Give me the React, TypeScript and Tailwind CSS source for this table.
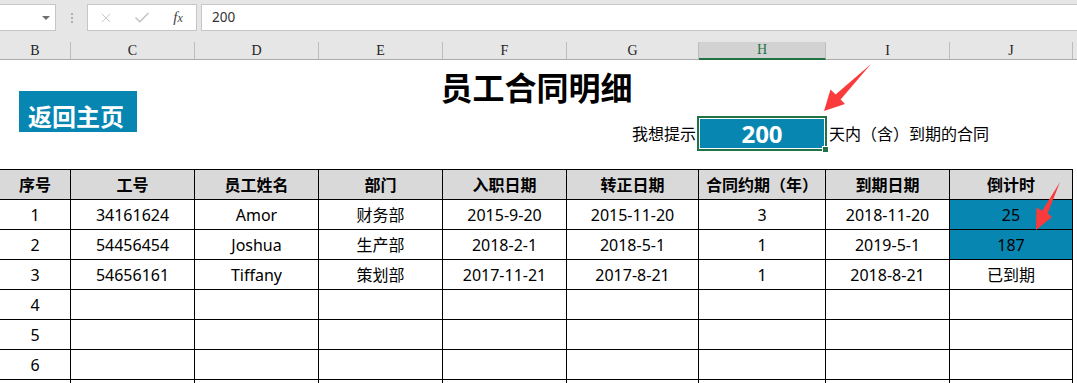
import React from "react";
import { X, Check } from "lucide-react";

const font = { fontFamily: '"Noto Sans", "Noto Sans CJK SC", sans-serif' };

const letters = ["B", "C", "D", "E", "F", "G", "H", "I", "J", ""];
const header = ["序号", "工号", "员工姓名", "部门", "入职日期", "转正日期", "合同约期（年）", "到期日期", "倒计时"];
const rows: { cells: string[]; blue?: boolean }[] = [
  { cells: ["1", "34161624", "Amor", "财务部", "2015-9-20", "2015-11-20", "3", "2018-11-20", "25"], blue: true },
  { cells: ["2", "54456454", "Joshua", "生产部", "2018-2-1", "2018-5-1", "1", "2019-5-1", "187"], blue: true },
  { cells: ["3", "54656161", "Tiffany", "策划部", "2017-11-21", "2017-8-21", "1", "2018-8-21", "已到期"] },
  { cells: ["4", "", "", "", "", "", "", "", ""] },
  { cells: ["5", "", "", "", "", "", "", "", ""] },
  { cells: ["6", "", "", "", "", "", "", "", ""] },
  { cells: ["", "", "", "", "", "", "", "", ""] },
];

const gridCols = "grid grid-cols-[71px_124px_124px_124px_124px_132px_127px_124px_123px_1fr]";

export default function App() {
  return (
    <div className="relative w-[1077px] h-[383px] overflow-hidden bg-white" style={font}>
      {/* formula bar */}
      <div className="flex h-[42px] bg-[#e6e6e6] pt-[4px] items-start">
        <div className="w-[56px] h-[27px] bg-white border border-l-0 border-[#c6c6c6] flex items-center justify-end pr-[5px]">
          <div className="w-0 h-0 border-l-[4px] border-r-[4px] border-t-[4px] border-l-transparent border-r-transparent border-t-[#707070]" />
        </div>
        <div className="w-[31px] h-[27px] flex flex-col items-center justify-center gap-[2px]">
          <div className="w-[2px] h-[2px] bg-[#b0b0b0]" />
          <div className="w-[2px] h-[2px] bg-[#b0b0b0]" />
          <div className="w-[2px] h-[2px] bg-[#b0b0b0]" />
        </div>
        <div className="w-[110px] h-[27px] bg-white border border-[#c6c6c6] flex items-center">
          <div className="w-[36px] flex justify-center">
            <X size={16} strokeWidth={1.2} color="#bdbdbd" />
          </div>
          <div className="w-[36px] flex justify-center">
            <Check size={18} strokeWidth={2.2} color="#c4c4c4" />
          </div>
          <div className="w-[36px] flex justify-center">
            <span className="italic text-[15px] text-[#444]" style={{ fontFamily: '"Liberation Serif", serif' }}>
              f<span className="text-[12px]">x</span>
            </span>
          </div>
        </div>
        <div className="ml-[4px] flex-1 h-[27px] bg-white border border-r-0 border-[#c6c6c6] flex items-center pl-[10px]">
          <span className="text-[13.5px] text-[#333]">200</span>
        </div>
      </div>

      {/* column letters */}
      <div className={`${gridCols} h-[18px] bg-[#e6e6e6] border-b border-[#ababab]`}>
        {letters.map((l, i) => (
          <div
            key={i}
            className={`flex items-center justify-center text-[14px] leading-none ${
              i < 9 ? "border-r border-[#bdbdbd]" : ""
            } ${l === "H" ? "bg-[#d2d2d2] text-[#217346] border-b-2 border-b-[#217346] -mb-px" : "text-[#222]"}`}
            style={{ fontFamily: '"Liberation Serif", serif' }}
          >
            {l}
          </div>
        ))}
      </div>

      {/* top block */}
      <div className={`${gridCols} grid-rows-[56px_35px_18px]`}>
        <div className="col-start-1 col-span-2 row-start-1 row-span-2 self-start mt-[31px] ml-[19px] w-[118px] h-[41px] bg-[#0786b2] flex items-end pl-[9px] pb-[3px]">
          <span className="text-white font-bold text-[24px] leading-[24px]">返回主页</span>
        </div>
        <div className="col-start-1 col-span-9 row-start-1 flex justify-center pt-[12px]">
          <span className="text-[32px] leading-[32px] font-bold text-black">员工合同明细</span>
        </div>
        <div className="col-start-6 row-start-2 flex items-center justify-end pr-[3px]">
          <span className="text-[16px] text-black whitespace-nowrap">我想提示</span>
        </div>
        <div className="col-start-7 row-start-2 relative -ml-[2px] -mr-px border-2 border-[#217346]">
          <div className="h-full border border-white bg-[#0786b2] flex items-center justify-center">
            <span className="text-white font-bold text-[24px] leading-none">200</span>
          </div>
          <div className="absolute -right-[4px] -bottom-[4px] w-[7px] h-[7px] bg-[#217346] border border-white" />
        </div>
        <div className="col-start-8 col-span-3 row-start-2 flex items-center pl-[3px]">
          <span className="text-[16px] text-black whitespace-nowrap">天内（含）到期的合同</span>
        </div>
      </div>

      {/* table */}
      <div className={`${gridCols} h-[31px]`}>
        {header.map((h, i) => (
          <div
            key={i}
            className="bg-[#d9d9d9] border-t border-r border-b border-black flex items-center justify-center font-bold text-[16px] text-black whitespace-nowrap"
          >
            {h}
          </div>
        ))}
        <div className="bg-white" />
      </div>
      {rows.map((r, ri) => (
        <div key={ri} className={`${gridCols} h-[30px]`}>
          {r.cells.map((c, i) => (
            <div
              key={i}
              className={`border-r border-b border-black flex items-center justify-center text-[16px] text-black whitespace-nowrap ${
                i === 8 && r.blue ? "bg-[#0786b2]" : ""
              }`}
            >
              {c}
            </div>
          ))}
          <div className="bg-white" />
        </div>
      ))}

      {/* arrows overlay */}
      <svg className="absolute inset-0 pointer-events-none" width="1077" height="383" viewBox="0 0 1077 383">
        <polygon
          points="871,64 840.6,99.4 845,104 824,111 830.5,89.5 835.6,94.4"
          fill="#fb3b3b"
        />
        <polygon
          points="1060,182 1047.6,213.4 1052,217 1036,230 1036.5,207.5 1042.2,210.8"
          fill="#fb3b3b"
        />
      </svg>
    </div>
  );
}
